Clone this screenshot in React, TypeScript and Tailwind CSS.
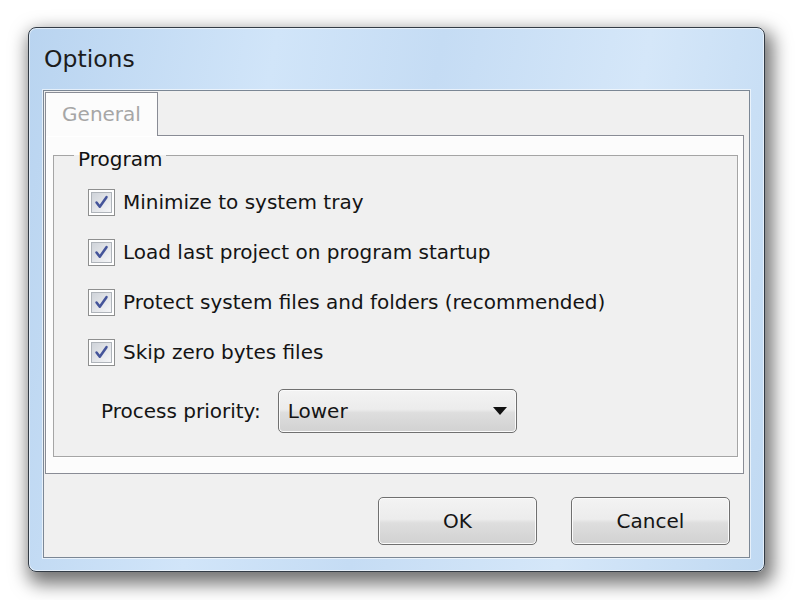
import React from "react";

function CheckBox() {
  return (
    <span className="flex h-[27px] w-[27px] shrink-0 items-center justify-center border border-[#8e8f8f] bg-white">
      <span className="flex h-[21px] w-[21px] items-center justify-center border border-[#aeb3b9] bg-[linear-gradient(135deg,#cfd3d9_0%,#e4e6ea_55%,#f4f5f7_100%)]">
        <svg viewBox="0 0 21 21" className="h-[21px] w-[21px]">
          <path
            d="M5 10.5 L8.6 15.2 L16 4.6"
            fill="none"
            stroke="#44549a"
            strokeWidth="2.8"
            strokeLinecap="round"
            strokeLinejoin="round"
          />
        </svg>
      </span>
    </span>
  );
}

function CheckRow({ label }: { label: string }) {
  return (
    <div className="flex h-[50px] items-center gap-[8px] pl-[34px]">
      <CheckBox />
      <span className="whitespace-nowrap">{label}</span>
    </div>
  );
}

const buttonFace =
  "rounded-[5px] border border-[#707070] bg-[linear-gradient(#f3f3f3_0%,#ececec_46%,#dedede_54%,#d1d1d1_100%)] shadow-[inset_0_0_0_1px_#fbfbfb]";

export default function App() {
  const options = [
    "Minimize to system tray",
    "Load last project on program startup",
    "Protect system files and folders (recommended)",
    "Skip zero bytes files",
  ];

  return (
    <div className="h-[600px] w-[800px] overflow-hidden bg-white pl-[28px] pt-[27px] font-['DejaVu_Sans',Verdana,sans-serif] text-[20px] text-[#141414]">
      {/* window frame */}
      <div className="flex h-[545px] w-[737px] flex-col rounded-[8px] border border-[#333c46] bg-[linear-gradient(100deg,#b9d4f0_0%,#d1e5f9_30%,#c5dcf4_50%,#d5e7f9_75%,#c0d9f2_100%)] shadow-[4px_8px_18px_4px_rgba(0,0,0,0.55),inset_0_0_0_1px_rgba(255,255,255,0.55)]">
        <div className="flex h-[62px] items-center pl-[15px] pt-[2px] text-[23.5px] text-[#1c1c1c]">
          Options
        </div>

        <div className="flex flex-1 flex-col px-[14px] pb-[13px]">
          {/* client area */}
          <div className="flex flex-1 flex-col border border-[#7b8795] bg-[#f0f0f0] shadow-[0_0_0_1px_rgba(255,255,255,0.6)]">
            {/* tab strip */}
            <div className="flex pl-[1px] pt-[1px]">
              <div className="relative z-10 -mb-px flex h-[44px] w-[113px] items-center justify-center border border-b-0 border-[#898c95] bg-[#fcfcfc] pb-[2px] text-[20px] text-[#a6a6a6]">
                General
              </div>
            </div>

            {/* tab page */}
            <div className="ml-[1px] h-[339px] w-[699px] border border-[#898c95] bg-[#fcfcfc] pl-[7px] pt-[3px] shadow-[inset_1px_1px_0_#ffffff]">
              <fieldset className="h-[318px] w-[685px] border border-[#a5a5a5] bg-[#f0f0f0] shadow-[1px_1px_0_#ffffff]">
                <legend className="ml-[20px] px-[4px] pt-[8px] leading-[24px] text-[#111]">
                  Program
                </legend>
                <div className="flex flex-col pt-[6px]">
                  {options.map((o) => (
                    <CheckRow key={o} label={o} />
                  ))}
                  <div className="mt-[12px] flex h-[44px] items-center gap-[17px] pl-[47px]">
                    <span className="whitespace-nowrap">Process priority:</span>
                    <div
                      className={`flex h-[44px] w-[239px] items-center justify-between pl-[9px] pr-[9px] ${buttonFace}`}
                    >
                      <span>Lower</span>
                      <svg viewBox="0 0 14 8" className="h-[8px] w-[14px]">
                        <path d="M0 0 L14 0 L7 8 Z" fill="#111" />
                      </svg>
                    </div>
                  </div>
                </div>
              </fieldset>
            </div>

            {/* dialog buttons */}
            <div className="flex justify-end gap-[34px] pr-[19px] pt-[23px]">
              <button
                className={`flex h-[48px] w-[159px] items-center justify-center ${buttonFace}`}
              >
                OK
              </button>
              <button
                className={`flex h-[48px] w-[159px] items-center justify-center ${buttonFace}`}
              >
                Cancel
              </button>
            </div>
          </div>
        </div>
      </div>
    </div>
  );
}
